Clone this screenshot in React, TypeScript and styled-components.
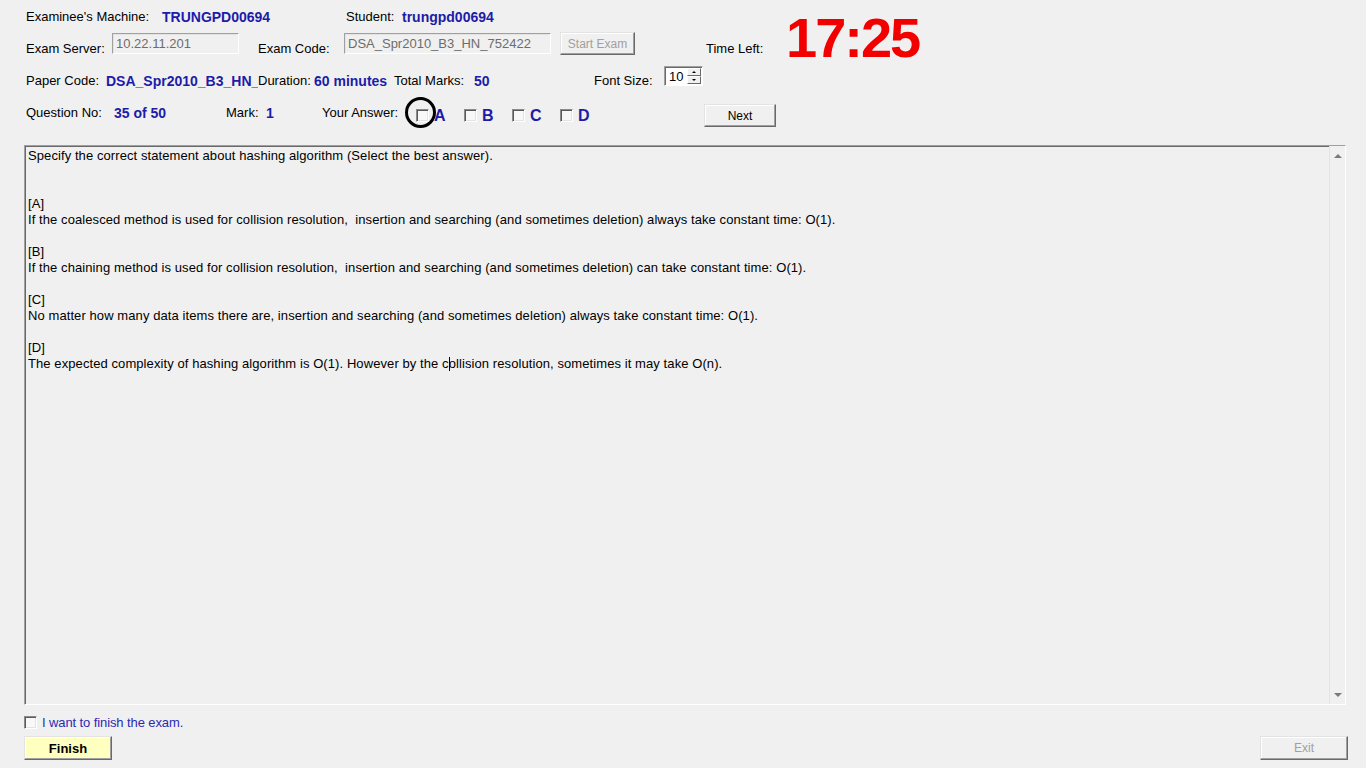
import React from "react";
import styled, { createGlobalStyle } from "styled-components";

const Global = createGlobalStyle`
  html, body { margin: 0; padding: 0; background: #f0f0f0; }
  * { box-sizing: border-box; }
`;

const BLUE = "#1c1ca8";

const Page = styled.div`
  width: 1366px;
  height: 768px;
  overflow: hidden;
  background: #f0f0f0;
  font-family: "Liberation Sans", Arial, sans-serif;
  font-size: 13px;
  color: #000;
  padding: 8px 0 0 24px;
  display: flex;
  flex-direction: column;
`;

const Header = styled.div`
  padding-left: 2px;
  display: flex;
  flex-direction: column;
`;

const Row = styled.div<{ $h: number; $mt: number }>`
  display: flex;
  align-items: flex-start;
  height: ${(p) => p.$h}px;
  margin-top: ${(p) => p.$mt}px;
`;

const Cell = styled.div<{ $w?: number; $mt?: number; $ml?: number }>`
  flex-shrink: 0;
  ${(p) => (p.$w ? `width: ${p.$w}px;` : "")}
  margin-top: ${(p) => p.$mt ?? 0}px;
  margin-left: ${(p) => p.$ml ?? 0}px;
  padding-top: 1px;
  line-height: 16px;
  white-space: nowrap;
`;

const Label = styled(Cell)`
  font-size: 13px;
`;

const Value = styled(Cell)<{ $clip?: boolean }>`
  font-size: 14px;
  font-weight: bold;
  color: ${BLUE};
  overflow: ${(p) => (p.$clip ? "hidden" : "visible")};
`;

const TextBox = styled.div<{ $w: number; $ml?: number }>`
  flex-shrink: 0;
  width: ${(p) => p.$w}px;
  height: 21px;
  margin-top: 1px;
  margin-left: ${(p) => p.$ml ?? 0}px;
  border: 1px solid;
  border-color: #a0a0a0 #ffffff #ffffff #a0a0a0;
  box-shadow: inset 1px 1px #e3e3e3;
  background: #f0f0f0;
  color: #6d6d6d;
  padding-left: 3px;
  line-height: 19px;
  font-size: 13px;
  white-space: nowrap;
  overflow: hidden;
`;

const WinButton = styled.div<{
  $w: number;
  $h: number;
  $ml?: number;
  $disabled?: boolean;
  $yellow?: boolean;
  $bold?: boolean;
}>`
  flex-shrink: 0;
  width: ${(p) => p.$w}px;
  height: ${(p) => p.$h}px;
  margin-left: ${(p) => p.$ml ?? 0}px;
  display: flex;
  align-items: center;
  justify-content: center;
  background: ${(p) => (p.$yellow ? "#ffffc0" : "#f0f0f0")};
  border: 1px solid;
  border-color: #e3e3e3 #696969 #696969 #e3e3e3;
  box-shadow: inset -1px -1px #a0a0a0, inset 1px 1px #ffffff;
  color: ${(p) => (p.$disabled ? "#a0a0a0" : "#000")};
  font-size: ${(p) => (p.$bold ? 13 : 12)}px;
  font-weight: ${(p) => (p.$bold ? "bold" : "normal")};
  white-space: nowrap;
`;

const Clock = styled.div`
  flex-shrink: 0;
  font-size: 56px;
  font-weight: bold;
  line-height: 28px;
  letter-spacing: -2px;
  color: #f20000;
  margin-top: -8px;
  white-space: nowrap;
`;

const Spinner = styled.div`
  flex-shrink: 0;
  width: 39px;
  height: 20px;
  display: flex;
  background: #ffffff;
  border: 1px solid;
  border-color: #a0a0a0 #ffffff #ffffff #a0a0a0;
  box-shadow: inset 1px 1px #696969;
`;

const SpinValue = styled.div`
  flex: 1;
  padding: 1px 0 0 4px;
  line-height: 17px;
  font-size: 13px;
`;

const SpinButtons = styled.div`
  width: 15px;
  display: flex;
  flex-direction: column;
  padding: 1px 1px 1px 0;
`;

const SpinHalf = styled.div`
  flex: 1;
  display: flex;
  align-items: center;
  justify-content: center;
  background: #f0f0f0;
  border: 1px solid;
  border-color: #ffffff #696969 #696969 #ffffff;
`;

const Tri = styled.span<{ $up?: boolean; $color?: string; $size?: number }>`
  width: 0;
  height: 0;
  border-left: ${(p) => p.$size ?? 2}px solid transparent;
  border-right: ${(p) => p.$size ?? 2}px solid transparent;
  ${(p) =>
    p.$up
      ? `border-bottom: ${p.$size ?? 2}px solid ${p.$color ?? "#000"};`
      : `border-top: ${p.$size ?? 2}px solid ${p.$color ?? "#000"};`}
`;

const Option = styled.div`
  position: relative;
  flex-shrink: 0;
  width: 48px;
  display: flex;
  align-items: flex-start;
`;

const CheckBox = styled.span<{ $mt?: number }>`
  flex-shrink: 0;
  display: block;
  width: 13px;
  height: 13px;
  margin-top: ${(p) => p.$mt ?? 0}px;
  background: #f8f8f8;
  border: 1px solid;
  border-color: #8a8a8a #ffffff #ffffff #8a8a8a;
  box-shadow: inset 1px 1px #5a5a5a, inset -1px -1px #e3e3e3;
`;

const OptionLetter = styled.span`
  margin: 4px 0 0 5px;
  font-size: 16px;
  font-weight: bold;
  line-height: 16px;
  color: ${BLUE};
`;

const Circle = styled.span`
  position: absolute;
  left: -11px;
  top: -7px;
  width: 31px;
  height: 31px;
  border: 3.5px solid #000;
  border-radius: 50%;
`;

const Panel = styled.div`
  margin-top: 18px;
  width: 1322px;
  height: 560px;
  display: flex;
  border: 1px solid;
  border-color: #a0a0a0 #ffffff #ffffff #a0a0a0;
  box-shadow: inset 1px 1px #696969;
`;

const Content = styled.div`
  flex: 1;
  padding: 2px 0 0 3px;
  font-size: 13px;
  letter-spacing: 0.085px;
  line-height: 16px;
  white-space: pre;
`;

const Line = styled.div`
  height: 16px;
`;

const Caret = styled.span`
  display: inline-block;
  width: 1px;
  height: 14px;
  margin-right: -1px;
  background: #000;
  vertical-align: -3px;
`;

const ScrollBar = styled.div`
  width: 16px;
  display: flex;
  flex-direction: column;
  justify-content: space-between;
  align-items: center;
  padding: 8px 0 7px;
  border-left: 1px solid #e3e3e3;
  background: #f0f0f0;
`;

const FinishRow = styled.div`
  margin-top: 9px;
  height: 16px;
  display: flex;
  align-items: flex-start;
`;

const FinishLabel = styled.span`
  margin-left: 5px;
  padding-top: 1px;
  line-height: 16px;
  color: #2b2bb0;
  font-size: 13px;
  letter-spacing: -0.1px;
`;

const ButtonRow = styled.div`
  margin-top: 6px;
  width: 1324px;
  display: flex;
  justify-content: space-between;
`;

const lines: React.ReactNode[] = [
  "Specify the correct statement about hashing algorithm (Select the best answer).",
  "",
  "",
  "[A]",
  "If the coalesced method is used for collision resolution,  insertion and searching (and sometimes deletion) always take constant time: O(1).",
  "",
  "[B]",
  "If the chaining method is used for collision resolution,  insertion and searching (and sometimes deletion) can take constant time: O(1).",
  "",
  "[C]",
  "No matter how many data items there are, insertion and searching (and sometimes deletion) always take constant time: O(1).",
  "",
  "[D]",
  <>
    The expected complexity of hashing algorithm is O(1). However by the c
    <Caret />
    ollision resolution, sometimes it may take O(n).
  </>,
];

export default function App() {
  return (
    <>
      <Global />
      <Page>
        <Header>
          <Row $h={16} $mt={0}>
            <Label $w={136}>Examinee's Machine:</Label>
            <Value $w={184}>TRUNGPD00694</Value>
            <Label $w={56}>Student:</Label>
            <Value>trungpd00694</Value>
          </Row>
          <Row $h={28} $mt={8}>
            <Label $w={86} $mt={8}>Exam Server:</Label>
            <TextBox $w={127}>10.22.11.201</TextBox>
            <Label $w={86} $mt={8} $ml={19}>Exam Code:</Label>
            <TextBox $w={207}>DSA_Spr2010_B3_HN_752422</TextBox>
            <WinButton $w={75} $h={23} $ml={9} $disabled>
              Start Exam
            </WinButton>
            <Label $w={80} $mt={8} $ml={71}>Time Left:</Label>
            <Clock>17:25</Clock>
          </Row>
          <Row $h={20} $mt={6}>
            <Label $w={80} $mt={6}>Paper Code:</Label>
            <Value $w={152} $mt={6} $clip>DSA_Spr2010_B3_HN_</Value>
            <Label $w={56} $mt={6}>Duration:</Label>
            <Value $w={80} $mt={6}>60 minutes</Value>
            <Label $w={80} $mt={6}>Total Marks:</Label>
            <Value $w={120} $mt={6}>50</Value>
            <Label $w={70} $mt={6}>Font Size:</Label>
            <Spinner>
              <SpinValue>10</SpinValue>
              <SpinButtons>
                <SpinHalf>
                  <Tri $up />
                </SpinHalf>
                <SpinHalf>
                  <Tri />
                </SpinHalf>
              </SpinButtons>
            </Spinner>
          </Row>
          <Row $h={23} $mt={18}>
            <Label $w={88}>Question No:</Label>
            <Value $w={112}>35 of 50</Value>
            <Label $w={40}>Mark:</Label>
            <Value $w={56}>1</Value>
            <Label $w={94}>Your Answer:</Label>
            {["A", "B", "C", "D"].map((l, i) => (
              <Option key={l}>
                <CheckBox $mt={5} />
                <OptionLetter>{l}</OptionLetter>
                {i === 0 && <Circle />}
              </Option>
            ))}
            <WinButton $w={72} $h={23} $ml={96}>
              Next
            </WinButton>
          </Row>
        </Header>
        <Panel>
          <Content>
            {lines.map((l, i) => (
              <Line key={i}>{l}</Line>
            ))}
          </Content>
          <ScrollBar>
            <Tri $up $size={4} $color="#7a7a7a" />
            <Tri $size={4} $color="#7a7a7a" />
          </ScrollBar>
        </Panel>
        <FinishRow>
          <CheckBox $mt={2} />
          <FinishLabel>I want to finish the exam.</FinishLabel>
        </FinishRow>
        <ButtonRow>
          <WinButton $w={88} $h={24} $yellow $bold>
            Finish
          </WinButton>
          <WinButton $w={88} $h={24} $disabled>
            Exit
          </WinButton>
        </ButtonRow>
      </Page>
    </>
  );
}
